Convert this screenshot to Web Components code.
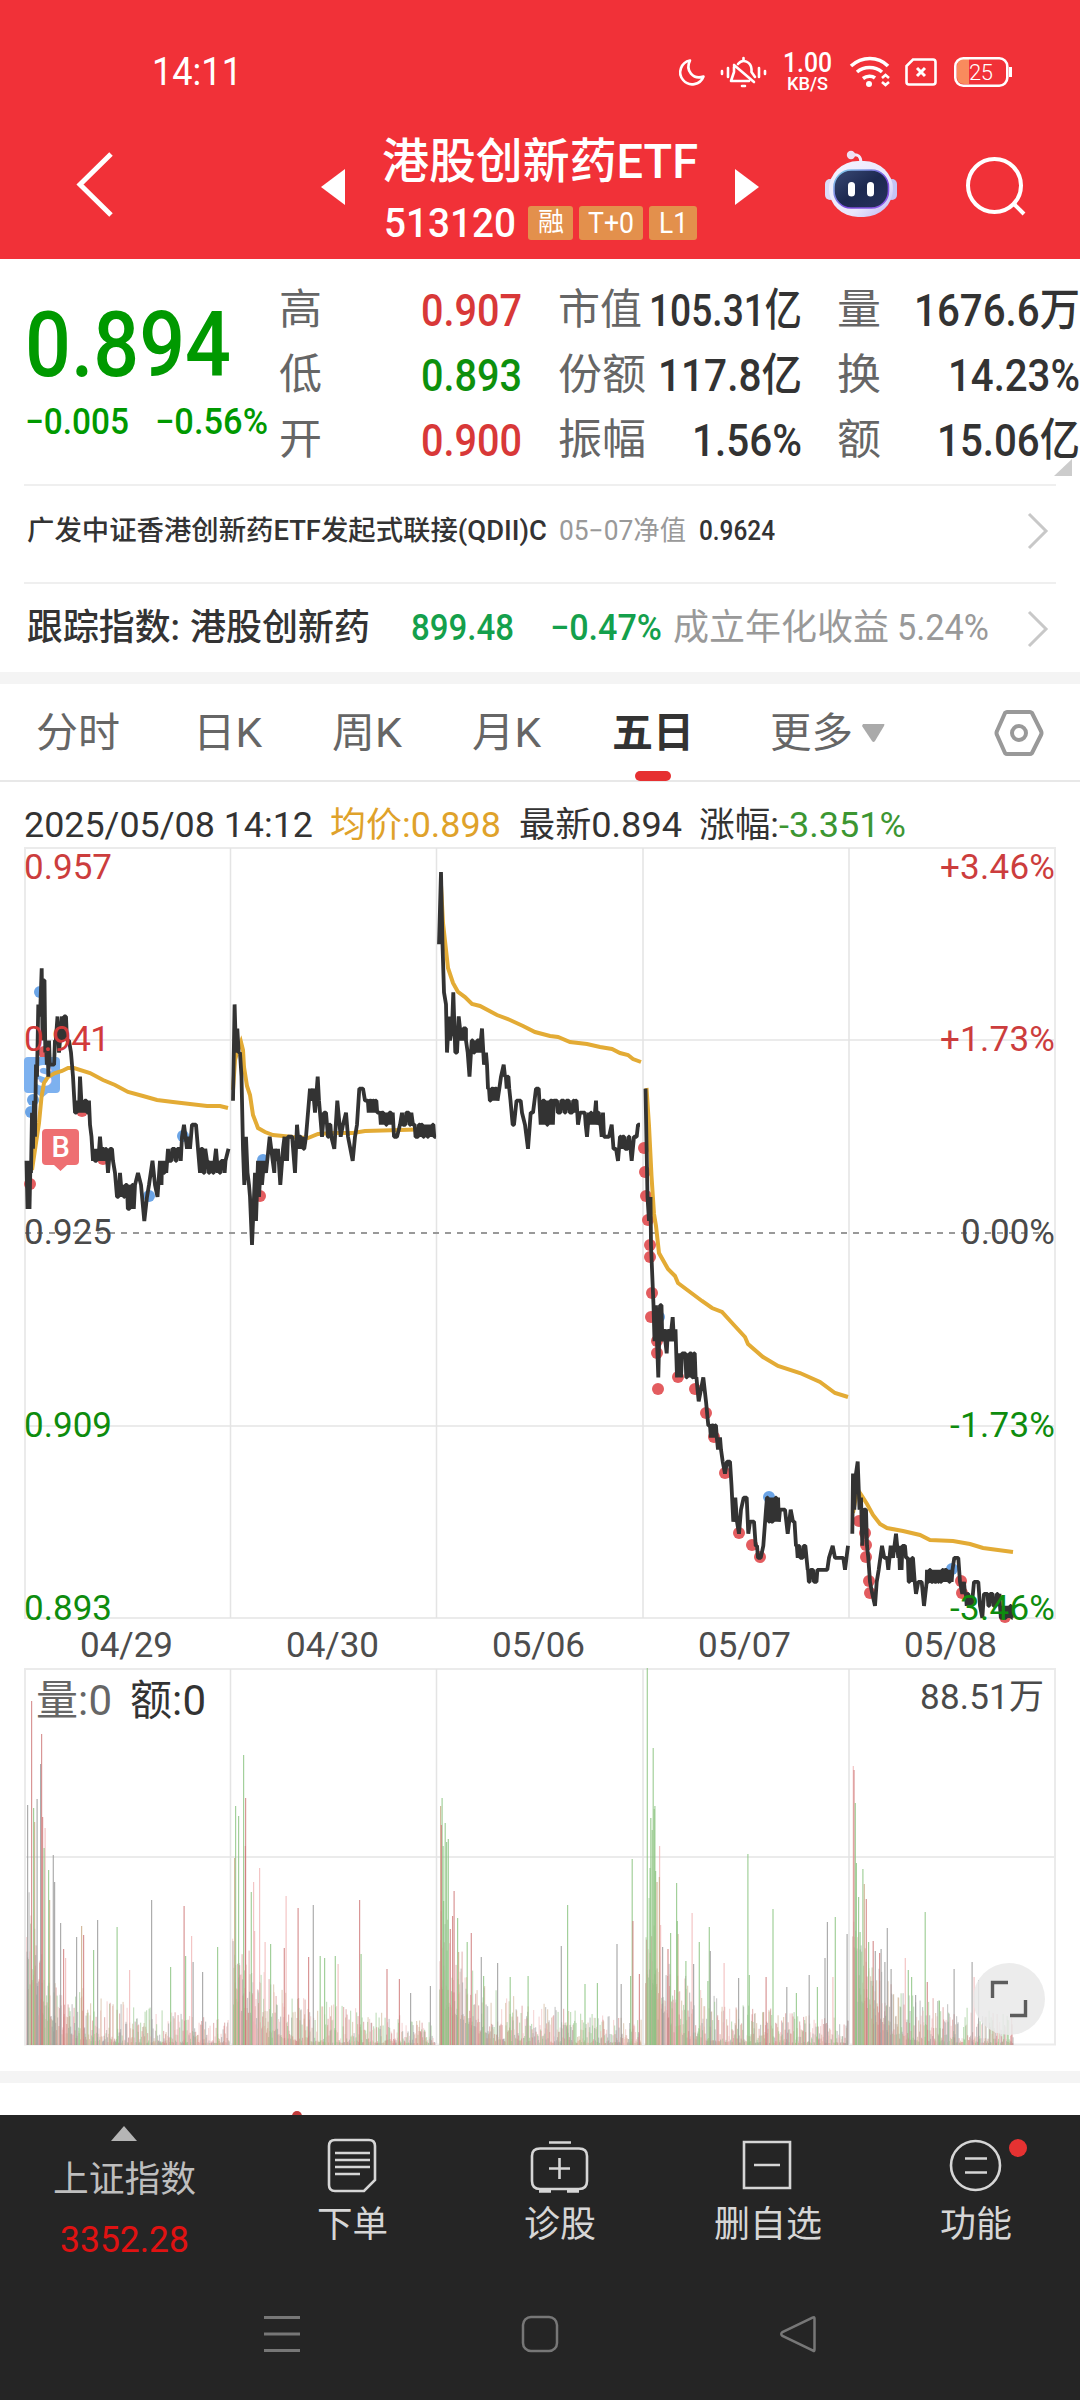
<!DOCTYPE html>
<html lang="zh-CN">
<head>
<meta charset="utf-8">
<title>港股创新药ETF 513120</title>
<style>
  body {
    margin: 0;
    width: 1080px;
    height: 2400px;
    overflow: hidden;
    background: #fff;
    font-family: Roboto, "Noto Sans CJK SC", sans-serif;
  }
</style>
</head>
<body>
<stock-page></stock-page>

<script>
// One line of text, squeezed or stretched to the width in "w"
class FitText extends HTMLElement {
  constructor() {
    super();
    this.attachShadow({ mode: "open" });
  }

  connectedCallback() {
    const width = Number(this.getAttribute("w"));
    this.shadowRoot.innerHTML = `
      <style>
        :host {
          display: block;
          flex: none;
          width: ${width}px;
          white-space: nowrap;
          line-height: 1.2;
        }
        span {
          display: inline-block;
          transform-origin: 0 50%;
        }
      </style>
      <span><slot></slot></span>
    `;
    const span = this.shadowRoot.querySelector("span");
    const natural = span.getBoundingClientRect().width;
    if (natural) span.style.transform = `scaleX(${width / natural})`;
  }
}

class StatusBar extends HTMLElement {
  constructor() {
    super();
    this.attachShadow({ mode: "open" }).innerHTML = `
      <style>
        :host {
          display: flex;
          align-items: center;
          height: 56px;
          padding: 44px 0 0 152px;
          color: #fff;
        }
        .time { font-size: 38px; margin-top: 2px; }
        svg { display: block; }
        .left { margin-left: 434px; }
        .speed {
          width: 50px;
          margin: 0 15px 0 11px;
          font-weight: 500;
        }
        .rate { font-size: 27px; line-height: 22px; height: 23px; }
        .unit { font-size: 19px; line-height: 18px; height: 18px; margin-left: 4px; }
        .rate fit-text, .unit fit-text { line-height: inherit; }
      </style>
      <fit-text class="time" w="90">14:11</fit-text>
      <svg class="left" width="96" height="56" viewBox="675 44 96 56" fill="none" stroke="#fff" stroke-width="2.600" stroke-linecap="round" stroke-linejoin="round">
        <path d="M689 60.500A12 12 0 1 0 702.500 76.500C692 80 684 70.500 689 60.500Z"/>
        <path d="M737 64C742 58 750 62 750.500 69V72L754 77M733 67V72L730 81H748M733 65L753 82" stroke-width="2.600"/>
        <path d="M742.500 58V60M741 86H744M727 68V77M721 71V74M758 68V77M764 71V74"/>
      </svg>
      <div class="speed">
        <div class="rate"><fit-text w="49">1.00</fit-text></div>
        <div class="unit"><fit-text w="41">KB/S</fit-text></div>
      </div>
      <svg width="170" height="56" viewBox="847 44 170 56" fill="none" stroke="#fff" stroke-width="3">
        <path d="M850 66C861 56 877 56 887 66M856 72C863 66 874 66 881 72M862 78.500C866 75.500 871 75.500 874 78" stroke-width="3.600"/>
        <circle cx="868" cy="84" r="3" fill="#fff" stroke="none"/>
        <path d="M881 78L884.500 75L888 78M881 82L884.500 85L888 82" stroke-width="2.600"/>
        <path d="M912 59.500H932Q934.500 59.500 934.500 62V82Q934.500 84.500 932 84.500H908Q905.500 84.500 905.500 82V66Z" stroke-width="2.600"/>
        <path d="M916 68L924 76M924 68L916 76"/>
        <path d="M963 59H968V84H963Q956 84 956 77V66Q956 59 963 59Z" fill="#f98b5d" stroke="none"/>
        <rect x="954.300" y="58.300" width="52" height="27.400" rx="8" stroke-width="2.600"/>
        <path d="M1009.500 67V77" stroke-width="3"/>
        <text x="968" y="79.500" font-size="22" font-weight="300" fill="#fff" stroke="none" textLength="24">25</text>
      </svg>
    `;
  }
}

class TitleBar extends HTMLElement {
  constructor() {
    super();
    this.attachShadow({ mode: "open" }).innerHTML = `
      <style>
        :host {
          display: flex;
          height: 124px;
          padding: 30px 0 4px;
          color: #fff;
        }
        svg { display: block; flex: none; }
        .title {
          width: 316px;
          margin: 0 37px;
        }
        .name, .code {
          display: flex;
          align-items: center;
          height: 62px;
        }
        .name { font-size: 48px; font-weight: 500; }
        .name fit-text { margin-top: 2px; }
        .code fit-text { font-size: 41px; font-weight: 500; margin: 2px 12px 0 2px; }
        .tag {
          display: flex;
          align-items: center;
          justify-content: center;
          height: 34px;
          border-radius: 3px;
          background: #e3904c;
          font-size: 29px;
          margin-right: 6px;
        }
        .tag:last-child { margin-right: 0; }
        .tag fit-text { font-size: inherit; font-weight: 400; margin: 0; }
      </style>
      <svg width="120" height="124" viewBox="0 130 120 124"><path d="M111 154L80 184.500L111 215" fill="none" stroke="#fff" stroke-width="5"/></svg>
      <svg width="225" height="124" viewBox="120 130 225 124"><path d="M321 187L345 169V205Z" fill="#fff"/></svg>
      <div class="title">
        <div class="name"><fit-text w="316">港股创新药ETF</fit-text></div>
        <div class="code">
          <fit-text w="132">513120</fit-text>
          <div class="tag" style="width:45px;font-size:26px"><fit-text w="26">融</fit-text></div>
          <div class="tag" style="width:64px"><fit-text w="46">T+0</fit-text></div>
          <div class="tag" style="width:48px"><fit-text w="29">L1</fit-text></div>
        </div>
      </div>
      <svg width="345" height="124" viewBox="735 130 345 124">
        <defs>
          <linearGradient id="shell" x1="0" y1="0" x2="1" y2="1">
            <stop offset="0" stop-color="#f4f3ff"/>
            <stop offset=".65" stop-color="#e9e6fc"/>
            <stop offset="1" stop-color="#b9b3f2"/>
          </linearGradient>
          <linearGradient id="visor" x1="0" y1="0" x2="1" y2="1">
            <stop offset="0" stop-color="#3a4a75"/>
            <stop offset=".5" stop-color="#1d2950"/>
            <stop offset="1" stop-color="#26315c"/>
          </linearGradient>
          <linearGradient id="rim" x1="0" y1="0" x2="1" y2="1">
            <stop offset="0" stop-color="#84dced"/>
            <stop offset=".6" stop-color="#7a49dc"/>
            <stop offset="1" stop-color="#8f5fe8"/>
          </linearGradient>
        </defs>
        <path d="M735 169L759 187L735 205Z" fill="#fff"/>
        <rect x="825" y="179" width="10" height="21" rx="5" fill="#dcdcf8"/>
        <rect x="887" y="179" width="10" height="21" rx="5" fill="#c4c4f5"/>
        <path d="M852 155Q861 153 861 163" fill="none" stroke="#f3e9fa" stroke-width="3"/>
        <circle cx="851" cy="155" r="4.200" fill="#efdff3"/>
        <rect x="829" y="161" width="64" height="56" rx="29" fill="url(#shell)"/>
        <rect x="834" y="170" width="54.500" height="38" rx="17" fill="url(#visor)" stroke="url(#rim)" stroke-width="1.600"/>
        <rect x="848" y="182" width="7" height="14.500" rx="3.500" fill="#fff"/>
        <rect x="867" y="182" width="7" height="14.500" rx="3.500" fill="#fff"/>
        <g fill="none" stroke="#fff" stroke-width="4">
          <circle cx="994.500" cy="185.500" r="26.500"/>
          <path d="M1013 203L1024 214"/>
        </g>
      </svg>
    `;
  }
}

class QuotePanel extends HTMLElement {
  constructor() {
    super();
    this.attachShadow({ mode: "open" }).innerHTML = `
      <style>
        :host {
          display: grid;
          grid-template-columns: 254px 268px 280px 278px;
          height: 225px;
          position: relative;
          color: #333;
        }
        .now { padding: 41px 0 0 25px; color: #090; font-weight: 500; }
        .price { font-size: 90px; height: 100px; }
        .price fit-text { line-height: 100px; margin-top: -4px; }
        .change { display: flex; gap: 26px; font-size: 36px; margin-top: 5px; }
        .col { padding-top: 19px; }
        .row {
          display: flex;
          align-items: center;
          justify-content: space-between;
          height: 65px;
          font-size: 45px;
          font-weight: 500;
        }
        .c1 { padding-left: 25px; }
        .c2 { padding-left: 36px; }
        .c3 { padding-left: 35px; }
        .label { font-size: 42px; font-weight: 400; color: #666; }
        .up { color: #d83838; }
        .down { color: #0d900d; }
        .corner { position: absolute; right: 8px; top: 200px; }
      </style>
      <div class="now">
        <div class="price"><fit-text w="206">0.894</fit-text></div>
        <div class="change"><fit-text w="104">−0.005</fit-text><fit-text w="113">−0.56%</fit-text></div>
      </div>
      <div class="col c1">
        <div class="row"><fit-text class="label" w="43">高</fit-text><fit-text class="up" w="101">0.907</fit-text></div>
        <div class="row"><fit-text class="label" w="43">低</fit-text><fit-text class="down" w="101">0.893</fit-text></div>
        <div class="row"><fit-text class="label" w="43">开</fit-text><fit-text class="up" w="101">0.900</fit-text></div>
      </div>
      <div class="col c2">
        <div class="row"><fit-text class="label" w="84">市值</fit-text><fit-text w="153">105.31亿</fit-text></div>
        <div class="row"><fit-text class="label" w="88">份额</fit-text><fit-text w="144">117.8亿</fit-text></div>
        <div class="row"><fit-text class="label" w="88">振幅</fit-text><fit-text w="110">1.56%</fit-text></div>
      </div>
      <div class="col c3">
        <div class="row"><fit-text class="label" w="44">量</fit-text><fit-text w="166">1676.6万</fit-text></div>
        <div class="row"><fit-text class="label" w="44">换</fit-text><fit-text w="132">14.23%</fit-text></div>
        <div class="row"><fit-text class="label" w="44">额</fit-text><fit-text w="143">15.06亿</fit-text></div>
      </div>
      <svg class="corner" width="18" height="17"><path d="M18 0V17H0Z" fill="#ccc"/></svg>
    `;
  }
}

// Row with a hairline above it and a chevron at its right end
class LinkRow extends HTMLElement {
  constructor() {
    super();
    this.attachShadow({ mode: "open" }).innerHTML = `
      <style>
        :host {
          display: flex;
          align-items: center;
          box-sizing: border-box;
          margin: 0 24px;
          padding: 0 7px 0 3px;
          border-top: 2px solid #efefef;
        }
        .text { display: flex; align-items: center; flex: 1; }
      </style>
      <div class="text"><slot></slot></div>
      <svg width="22" height="38"><path d="M2 2L19 19L2 36" fill="none" stroke="#c8c8c8" stroke-width="3"/></svg>
    `;
  }
}

class PeriodTabs extends HTMLElement {
  constructor() {
    super();
    this.attachShadow({ mode: "open" }).innerHTML = `
      <style>
        :host {
          display: flex;
          align-items: center;
          box-sizing: border-box;
          height: 98px;
          padding: 3px 0 0 36px;
          border-bottom: 2px solid #e8e8e8;
          font-size: 41px;
          color: #666;
        }
        .active {
          position: relative;
          color: #333;
          font-weight: 700;
        }
        .active::after {
          content: "";
          position: absolute;
          left: 23px;
          top: 62px;
          width: 36px;
          height: 10px;
          border-radius: 5px;
          background: #e63031;
        }
        svg { display: block; }
      </style>
      <fit-text w="84">分时</fit-text>
      <fit-text w="69" style="margin-left:73px">日K</fit-text>
      <fit-text w="70" style="margin-left:70px">周K</fit-text>
      <fit-text w="69" style="margin-left:70px">月K</fit-text>
      <div class="active" style="margin-left:71px"><fit-text w="82">五日</fit-text></div>
      <fit-text w="83" style="margin-left:76px">更多</fit-text>
      <svg width="220" height="60" viewBox="854 703 220 60">
        <path d="M864 723H885Q886 723 885 725L876 740Q874.500 742 873 740L863 725Z" fill="#aaa"/>
        <g fill="none" stroke="#999" stroke-width="4" stroke-linejoin="round">
          <path d="M1008 711H1031Q1032 711 1033 712L1042 730Q1043 732 1042 734L1033 752Q1032 753 1031 753H1008Q1007 753 1006 752L998 734Q997 732 998 730L1006 712Q1007 711 1008 711Z"/>
          <circle cx="1020" cy="732" r="7"/>
        </g>
      </svg>
    `;
  }
}

// Price in thousandths. "x price" is a point, "x1~x2 low high" a stretch that flickers.
const PRICES = [
  "26.500 931,27.500 927,28.500 931,29.500 927,30.500 931,31 930,32 935,33 932,34 936,35 933,36 939,37 938,38.300 944,40 943,41.700 947,42.500 941,43.500 946,44.500 946,45.300 940,46~48 939 941,48.300 938,49~56 939 941,57.500 943,59 940,60 941,62 943,63 941,64 943,66 943,67 941,69 941,71 940,73 938,75 935,76.500 935,78 936,79 935,80 938,82 935,83~89 935 936,90 934,91.500 933,93 931,94~99 931 932,100 933,102 931,103~107 931 932,108 930,110 932,112 932,113 931,115 930,117 928,118.500 928,120 930,122 928,123~127 928 929,127~134 927 929,135 929,138 930,141 929,144.300 926,147 928,149 929,152.500 931,155 929,157.500 928,160 931,161.500 929,162~167 930 931,168~181 931 932,182 933,184 934,187 932,188 933,190 932,192 934,196 934,198 932,200 930,201~206 930 932,207~215 930 931,216 932,217~226 930 931,228.500 932",
  "233 936,234.600 944,236 940,237.300 942,238.700 940,240 940,241.500 938,243 932,244.300 929,246 933,247.500 930,249 929,250 928,252 924,253.500 927,255 930,256 926,258 931,259 928,261 931,262 929,264 931,266 930,269.700 933,272.700 931,274.300 930,275 932,277 931,278 932,280.300 929,283 932,284.500~293 931 933,295 930,297 934,299 932,300~305 932 933,306 933,308 935,310 937,311 936,313 937,315 935,317.700 938,319 936,321 934,322 933,324 935,326 935,327~332 933 934,334.300 932,337.300 936,340.700 933,343 934,346 935,348 933,352.700 931,355 933,357 934,359.300 937,363 937,365 936,367~378 935 936,380~393 934 935,394 933,397 933,400 934,402~412 934 935,413~436 933 934",
  "439 949,441 955,442.500 949,444 945,446 944,447 940,449 943,450 941,452 942,453.300 945,455.300 940,457 940,458.700 943,460~466 941 942,466 941,467.700 940,469.500 938,471.700 941,472~480 940 941,482 942,484 939,486 940,487 939,488 937,489~498 936 937,499.300 937,501 938,503.700 939,505~510 937 938,510.500 936,512.700 934,514 934,516.500 936,520.700 936,522 935,525 934,528 932,530.700 935,533 935,536 937,538.700 937,540.700 934,541~554 934 936,555 936,557~577 935 936,578 934,580 935,583 935,584~586 934 935,587 933,589~595 934 935,596 936,597 934,598~601 934 935,601.700 933,603 935,604 933,609 933,611.700 934,613.500 932,616 932,618 931,620~630 932 933,631.700 931,634 933,636.700 933,638 934,640 934",
  "645.500 937,647.500 928,649 926,650.500 928,651 924,652 922,653.500 919,654.500 916,656 919,657 916,658.300 913,660 919,661.500 919,662.300 916,664 917,666.700 915,668~672 916 917,672.700 918,674 916,675.500 917,677 913,678.500 915,680 914,681 913,682~697 913 915,697.500 912,698.700 911,701 912,703.300 913,706 911,708.300 909,710~717 908 909,718 907,720 908,721 907,722.700 906,725 905,727 906,730 906,731.500 904,733.300 901,735.300 903,737 901,739 900,741 902,743.700 903,746.700 903,748.300 900,750 901,754 901,755.700 899,757 899,758 898,760.700 898,763.300 899,766 902,767~779 901 903,780 902,785 902,787.700 900,790.700 902,793 901,794.500 901,796~806 898 899,807.700 897,808~818 896 897,820 897,827.300 897,829 898,832.700 899,835 898,843.300 898,845 897,848 899",
  "852.300 900,853 905,854.300 902,856 905,857.700 906,859.500 902,861 903,862.300 899,864 902,866 902,867 899,868.300 898,870 896,872.300 895,875 894,876.700 896,878.700 897,882 899,884.300 898,887 898,888.300 897,890.700 899,893 898,896 900,898.300 898,899~905 897 899,906 898,907~913 896 898,914.700 896,916 895,918.300 896,921.700 896,924 894,926.700 896,927~953 896 897,954.300 898,958.300 898,960 896,962.300 895,964 896,965~972 894 895,974 896,978.300 896,980 894,982.300 893,984 895,985~1000 894 895,1000~1013 893 894"
];

const AVERAGES = [
  "32,1170 36,1143 39,1123 41.500,1097 44,1083 48,1077 55,1073 62,1071 68,1068 74,1068 90,1073 103,1080 115,1085 128,1092 143,1096 157,1100 173,1102 190,1104 207,1106 220,1106 228,1108",
  "233,1090 235,1060 237,1053 241,1042 243,1050 244,1067 247,1086 250,1095 253,1115 258,1128 265,1132 273,1135 283,1136 293,1137 308,1138 318,1134 333,1133 353,1133 365,1131 400,1130 435,1129",
  "441,885 443,923 446,950 448,968 453,983 458,992 465,997 472,1004 480,1006 497,1015 510,1020 523,1026 535,1032 550,1036 558,1037 570,1042 587,1044 600,1047 612,1049 620,1053 628,1055 633,1059 641,1062",
  "646.500,1088 649,1126 651.500,1176 654,1214 656,1226 659,1253 668,1269 675,1276 678,1283 690,1292 702,1301 712,1308 722,1312 733,1324 745,1337 748,1344 763,1357 778,1366 800,1373 820,1382 835,1393 848,1397",
  "853,1513 855,1502 858,1490 862,1496 867,1504 873,1515 880,1524 887,1528 903,1531 920,1535 930,1540 953,1541 970,1544 983,1548 1013,1552"
];

const BUYS = "30,1184 44,1052 82,1111 103,1159 260,1196 644,1148 645,1172 646,1196 648,1220 650,1245 650,1257 652,1293 651,1317 657,1341 657,1353 658,1389 678,1377 695,1389 706,1413 714,1437 725,1473 739,1533 752,1545 760,1557 859,1521 865,1533 866,1545 866,1557 869,1581 870,1593 961,1581 962,1593 1005,1617";
const SELLS = "40,992 33,1100 31,1112 149,1196 183,1136 263,1160 659,1317 769,1497 952,1569";

function makeRandom(seed) {
  return () => {
    seed = (seed * 1103515245 + 12345) % 2147483648;
    return seed / 2147483648;
  };
}

function priceLine(text) {
  const points = [];
  const random = makeRandom(513120);
  const y = (price) => 1233 - (price - 925) * 12.03;
  for (const part of text.split(",")) {
    const [at, low, high] = part.split(" ");
    if (!high) {
      points.push(`${at},${y(low)}`);
      continue;
    }
    const [from, to] = at.split("~").map(Number);
    let up = true;
    for (let x = from; x <= to; x += .85) {
      points.push(`${x.toFixed(2)},${y(up ? high : low)}`);
      if (random() < .42) up = !up;
    }
  }
  return points.join(" ");
}

function dots(list, color) {
  return list.split(" ").map((p) => {
    const [x, y] = p.split(",");
    return `<circle cx="${x}" cy="${y}" r="6" fill="${color}"/>`;
  }).join("");
}

const DAY_LINES = [230.500, 436.500, 643, 849];

class PriceChart extends HTMLElement {
  constructor() {
    super();
    const label = (x, y, w, color, text) =>
      `<text x="${x}" y="${y}" textLength="${w}" fill="${color}">${text}</text>`;
    this.attachShadow({ mode: "open" }).innerHTML = `
      <style>
        :host { display: block; height: 819px; }
        svg { display: block; font-size: 35px; }
      </style>
      <svg width="1080" height="819" viewBox="0 847 1080 819">
        <g fill="none" stroke="#ebebeb" stroke-width="2">
          <path d="M25 848H1055V1618H25ZM25 1040H1055M25 1426H1055"/>
          <path d="${DAY_LINES.map((x) => `M${x} 848V1618`).join("")}" stroke-width="1.500" stroke="#e4e4e4"/>
        </g>
        <path d="M25 1233H1055" stroke="#999" stroke-width="2" stroke-dasharray="6 6"/>
        <g opacity=".9">${dots(BUYS, "#e04b4e")}${dots(SELLS, "#5b9be4")}</g>
        <path d="M28 1057H56Q60 1057 60 1061V1089Q60 1093 56 1093H48L42 1098L36 1093H28Q24 1093 24 1089V1061Q24 1057 28 1057Z" fill="#7db1ef"/>
        <text x="34" y="1086" font-size="30" font-weight="500" fill="#fff">S</text>
        <path d="M46 1129H75Q79 1129 79 1133V1161Q79 1165 75 1165H67L60.500 1171L54 1165H46Q42 1165 42 1161V1133Q42 1129 46 1129Z" fill="#ee6f72"/>
        <text x="51.500" y="1157" font-size="29" font-weight="500" fill="#fff">B</text>
        <g fill="none" stroke="#e3ab35" stroke-width="4">
          ${AVERAGES.map((p) => `<polyline points="${p}"/>`).join("")}
        </g>
        <g fill="none" stroke="#333" stroke-width="3.800" stroke-linejoin="bevel">
          ${PRICES.map((p) => `<polyline points="${priceLine(p)}"/>`).join("")}
        </g>
        ${label(24, 879, 88, "#cc3d3d", "0.957")}
        ${label(24, 1051, 86, "#d23a3a", "0.941")}
        ${label(24, 1244, 88, "#4a4a4a", "0.925")}
        ${label(24, 1437, 88, "#0e8c0e", "0.909")}
        ${label(24, 1620, 88, "#0e8c0e", "0.893")}
        ${label(940, 879, 115, "#cc3d3d", "+3.46%")}
        ${label(940, 1051, 115, "#cc3d3d", "+1.73%")}
        ${label(961, 1244, 94, "#4a4a4a", "0.00%")}
        ${label(950, 1437, 105, "#0e8c0e", "-1.73%")}
        ${label(950, 1620, 105, "#0e8c0e", "-3.46%")}
        ${["04/29", "04/30", "05/06", "05/07", "05/08"].map((d, i) => label(80 + i * 206, 1657, 93, "#4d4d4d", d)).join("")}
      </svg>
    `;
  }
}

// Tall bars: x, height, colour (r red, g green, k grey, p pink, t tan)
const PEAKS = "27,240k 31,344r 33,237g 34,223t 36.500,246k 40,281k 41,311r 42,228r 44.500,217p 43.500,197g 52.700,190k 48,175g 49,145t 54,163k 60,122k 63,96r 65,87p 76,108k 81,119t 83,110r 93,95g 97,125k 116.500,118g 129,75p 151,145k 183.500,139r 185,89g 191,109p 192.500,83k 170,78g 202,73k 217,98g " +
  "235,239g 234,187t 238,229g 243,290g 245,247r 244.800,199r 253,163p 250.700,153g 259,177p 254,114p 264.500,103p 270,101g 285.500,149p 283.700,97r 297.500,137r 308,88r 312.700,140k 319.600,89g 324,87g 334.700,89g 337.500,81p 359,145r 360.500,91g 386.400,76r 398.800,66r 410,52k 429.800,59k " +
  "440,239t 441.500,247g 440.800,220r 442.500,199g 444.600,222g 446,203g 447.700,206g 443,144g 453.500,154r 452,129r 457,127g 449.700,116r 458,93t 466.600,103g 470.700,112r 480.700,88k 497,82k 483,69g 527.500,69g 509.600,68g 560.700,99k 567,140g 584.400,61g 596.800,62g 616.400,101k 631.600,186g 632.300,124r 638.800,71r 630,69g 620.600,61k " +
  "646.700,377g 652.600,297g 654.300,239g 653.600,236g 650.200,227g 651.600,215g 649.500,177g 659,199p 658.800,168t 655,174g 656.400,163t 660,120p 662,98k 670,112g 676,162g 677.400,111t 676.700,124g 667.400,96r 691.500,132p 685.300,84g 693,81k 698.700,103g 708.700,118g 709.700,94k 723.500,82p 707.300,64g 738,67k 747.300,191g 748.700,70g 772.400,136g 765.500,68r 786.200,58k 795.800,52g 808.600,70k 816.800,58g 824.400,87k 826.800,123k 832.300,68p 834.700,128g 846.500,111k " +
  "852.700,279p 853.400,275r 854.700,242g 855.800,182g 858,148g 862.300,176g 863.700,161t 865.700,146r 859.500,113g 868,103g 872.600,104r 874.700,94k 880.500,96k 879,92r 884.300,83k 886.700,117k 890.500,76k 904.700,87p 907.700,75g 911,68g 924.600,133g 926.700,63r 915,50k 938.700,44g 953.500,76k 971.500,83k 973.500,68p 978,65k";
const BAR_COLORS = { r: "#d07c7c", g: "#8cc482", k: "#989898", p: "#f0b6b6", t: "#c9aa86" };

function volumeBars() {
  const random = makeRandom(20250508);
  const colors = Object.values(BAR_COLORS);
  const days = [[26, 228], [232, 434], [439, 640], [645, 847], [852, 1012]];
  let bars = "";
  const bar = (x, h, width, color, opacity) => {
    bars += `<rect x="${x}" y="${(2045 - h).toFixed(1)}" width="${width}" height="${h.toFixed(1)}" fill="${color}" opacity="${opacity}"/>`;
  };
  for (const [from, to] of days) {
    for (let x = from; x <= to; x++) {
      const t = x - from;
      const opening = 100 * Math.exp(-t / 18);
      const wave = 62 * Math.exp(-t / 150) + 8;
      for (let n = 0; n < 2; n++) {
        const h = 2 + opening * (.4 + random() * .7) + wave * Math.pow(random(), 2.2);
        bar(x + n * .5, h, 1.200, colors[Math.floor(random() * 5)], .5);
      }
    }
  }
  for (const peak of PEAKS.split(" ")) {
    const [x, rest] = peak.split(",");
    bar(x, parseFloat(rest), 1.200, BAR_COLORS[rest.slice(-1)], .8);
  }
  return bars;
}

class VolumeChart extends HTMLElement {
  constructor() {
    super();
    this.attachShadow({ mode: "open" }).innerHTML = `
      <style>
        :host { display: block; height: 405px; }
        svg { display: block; }
      </style>
      <svg width="1080" height="405" viewBox="0 1666 1080 405">
        <g fill="none" stroke="#ebebeb" stroke-width="2">
          <path d="M25 1669H1055V2044.500H25ZM25 1857H1055"/>
          <path d="${DAY_LINES.map((x) => `M${x} 1669V2044`).join("")}" stroke-width="1.500" stroke="#e4e4e4"/>
        </g>
        ${volumeBars()}
        <text x="36" y="1715" font-size="42" textLength="76" fill="#666">量:0</text>
        <text x="130" y="1715" font-size="42" textLength="76" fill="#333">额:0</text>
        <text x="920" y="1709" font-size="35" textLength="124" fill="#4a4a4a">88.51万</text>
        <circle cx="1009" cy="1999" r="36" fill="#e9e9e9" opacity=".86"/>
        <path d="M992.500 1998V1982.500H1008M1010 2015.500H1025.500V2000" fill="none" stroke="#5c5c5c" stroke-width="3.400"/>
      </svg>
    `;
  }
}

class BottomItem extends HTMLElement {
  constructor() {
    super();
    this.attachShadow({ mode: "open" }).innerHTML = `
      <style>
        :host {
          display: flex;
          flex-direction: column;
          align-items: center;
          width: 208px;
          padding-top: 20px;
          font-size: 36px;
          color: #d6d6d6;
        }
        .icon { height: 69px; }
      </style>
      <div class="icon"><slot name="icon"></slot></div>
      <slot></slot>
    `;
  }
}

class BottomBar extends HTMLElement {
  constructor() {
    super();
    this.attachShadow({ mode: "open" }).innerHTML = `
      <style>
        :host {
          display: block;
          height: 285px;
          background: #252525;
        }
        .items { display: flex; height: 170px; }
        .index {
          display: flex;
          flex-direction: column;
          align-items: center;
          width: 248px;
          padding-top: 11px;
          font-size: 36px;
          color: #bebebe;
        }
        .index svg { margin-bottom: 18px; }
        .value { margin-top: 17px; color: #e01212; }
        svg { display: block; }
        .line { fill: none; stroke: #d6d6d6; stroke-width: 2.6; }
        .nav { display: flex; padding: 0 264px; justify-content: space-between; margin-top: 29px; }
      </style>
      <div class="items">
        <div class="index">
          <svg width="26" height="15"><path d="M13 0L26 15H0Z" fill="#b5b5b5"/></svg>
          <fit-text w="143">上证指数</fit-text>
          <fit-text class="value" w="129">3352.28</fit-text>
        </div>
        <bottom-item>
          <svg slot="icon" class="line" width="70" height="62" viewBox="317 2135 70 62">
            <path d="M335 2140H369Q375 2140 375 2146V2180L364 2191H335Q329 2191 329 2185V2146Q329 2140 335 2140Z"/>
            <path d="M335 2153H370M335 2160H370M335 2167H370M335 2174H360"/>
          </svg>
          <fit-text w="71">下单</fit-text>
        </bottom-item>
        <bottom-item>
          <svg slot="icon" class="line" width="70" height="62" viewBox="525 2135 70 62">
            <path d="M549 2142.500H571M540 2148.500H579Q587 2148.500 587 2156V2181Q587 2189 579 2189H540Q532 2189 532 2181V2156Q532 2148.500 540 2148.500ZM539 2191.500H551M567 2191.500H579M559.500 2158V2179M549 2168.500H570"/>
          </svg>
          <fit-text w="72">诊股</fit-text>
        </bottom-item>
        <bottom-item>
          <svg slot="icon" class="line" width="70" height="62" viewBox="733 2135 70 62">
            <path d="M744 2142H790V2188H744ZM754 2165H780"/>
          </svg>
          <fit-text w="108">删自选</fit-text>
        </bottom-item>
        <bottom-item>
          <svg slot="icon" class="line" width="110" height="62" viewBox="921 2135 110 62">
            <circle cx="975.500" cy="2165.500" r="24.500"/>
            <path d="M965 2158.500H987M965 2172.500H987"/>
            <circle cx="1018" cy="2148" r="9" fill="#e63232" stroke="none"/>
          </svg>
          <fit-text w="72">功能</fit-text>
        </bottom-item>
      </div>
      <div class="nav">
        <svg width="36" height="40" fill="none" stroke="#777" stroke-width="3"><path d="M0 3.500H36M0 20H36M0 36.500H36"/></svg>
        <svg width="38" height="40" fill="none" stroke="#777" stroke-width="2.500"><rect x="2" y="3" width="34" height="34" rx="8"/></svg>
        <svg width="36" height="40" fill="none" stroke="#777" stroke-width="2.500"><path d="M33 3.500Q34.500 2.500 34.500 4.500V35.500Q34.500 38 33 36.500L2.500 22Q0 20 2.500 18Z"/></svg>
      </div>
    `;
  }
}

class StockPage extends HTMLElement {
  constructor() {
    super();
    this.attachShadow({ mode: "open" }).innerHTML = `
      <style>
        :host { display: block; }
        header { height: 259px; background: #f13138; }
        .band { height: 12px; background: #f4f4f4; }
        .fund { height: 98px; font-size: 27px; color: #333; font-weight: 500; padding-top: 0; padding-bottom: 6px; }
        .track { height: 90px; font-size: 36px; color: #333; font-weight: 500; padding-top: 2px; }
        .gray { color: #999; font-weight: 400; }
        .green { color: #14a04c; }
        .info {
          display: flex;
          align-items: center;
          height: 65px;
          padding: 23px 0 0 24px;
          box-sizing: border-box;
          font-size: 35px;
          color: #333;
        }
        .next { height: 32px; display: flex; align-items: flex-end; padding-left: 292px; }
      </style>
      <header>
        <status-bar></status-bar>
        <title-bar></title-bar>
      </header>
      <quote-panel></quote-panel>
      <link-row class="fund">
        <fit-text w="520">广发中证香港创新药ETF发起式联接(QDII)C</fit-text>
        <fit-text class="gray" w="127" style="margin-left:12px">05−07净值</fit-text>
        <fit-text w="76" style="margin-left:13px">0.9624</fit-text>
      </link-row>
      <link-row class="track">
        <fit-text w="153">跟踪指数:</fit-text>
        <fit-text w="180" style="margin-left:10px">港股创新药</fit-text>
        <fit-text class="green" w="103" style="margin-left:41px">899.48</fit-text>
        <fit-text class="green" w="112" style="margin-left:36px">−0.47%</fit-text>
        <fit-text class="gray" w="216" style="margin-left:11px">成立年化收益</fit-text>
        <fit-text class="gray" w="92" style="margin-left:8px">5.24%</fit-text>
      </link-row>
      <div class="band"></div>
      <period-tabs></period-tabs>
      <div class="info">
        <fit-text w="289">2025/05/08 14:12</fit-text>
        <fit-text w="171" style="margin-left:17px;color:#dfa22a">均价:0.898</fit-text>
        <fit-text w="163" style="margin-left:18px">最新0.894</fit-text>
        <fit-text w="80" style="margin-left:17px">涨幅:</fit-text>
        <fit-text w="127" style="color:#3c9632">-3.351%</fit-text>
      </div>
      <price-chart></price-chart>
      <volume-chart></volume-chart>
      <div class="band"></div>
      <div class="next"><svg width="10" height="4"><circle cx="5" cy="5" r="5" fill="#c03a3a"/></svg></div>
      <bottom-bar></bottom-bar>
    `;
  }
}

customElements.define("fit-text", FitText);
customElements.define("status-bar", StatusBar);
customElements.define("title-bar", TitleBar);
customElements.define("quote-panel", QuotePanel);
customElements.define("link-row", LinkRow);
customElements.define("period-tabs", PeriodTabs);
customElements.define("price-chart", PriceChart);
customElements.define("volume-chart", VolumeChart);
customElements.define("bottom-item", BottomItem);
customElements.define("bottom-bar", BottomBar);
customElements.define("stock-page", StockPage);
</script>
</body>
</html>
